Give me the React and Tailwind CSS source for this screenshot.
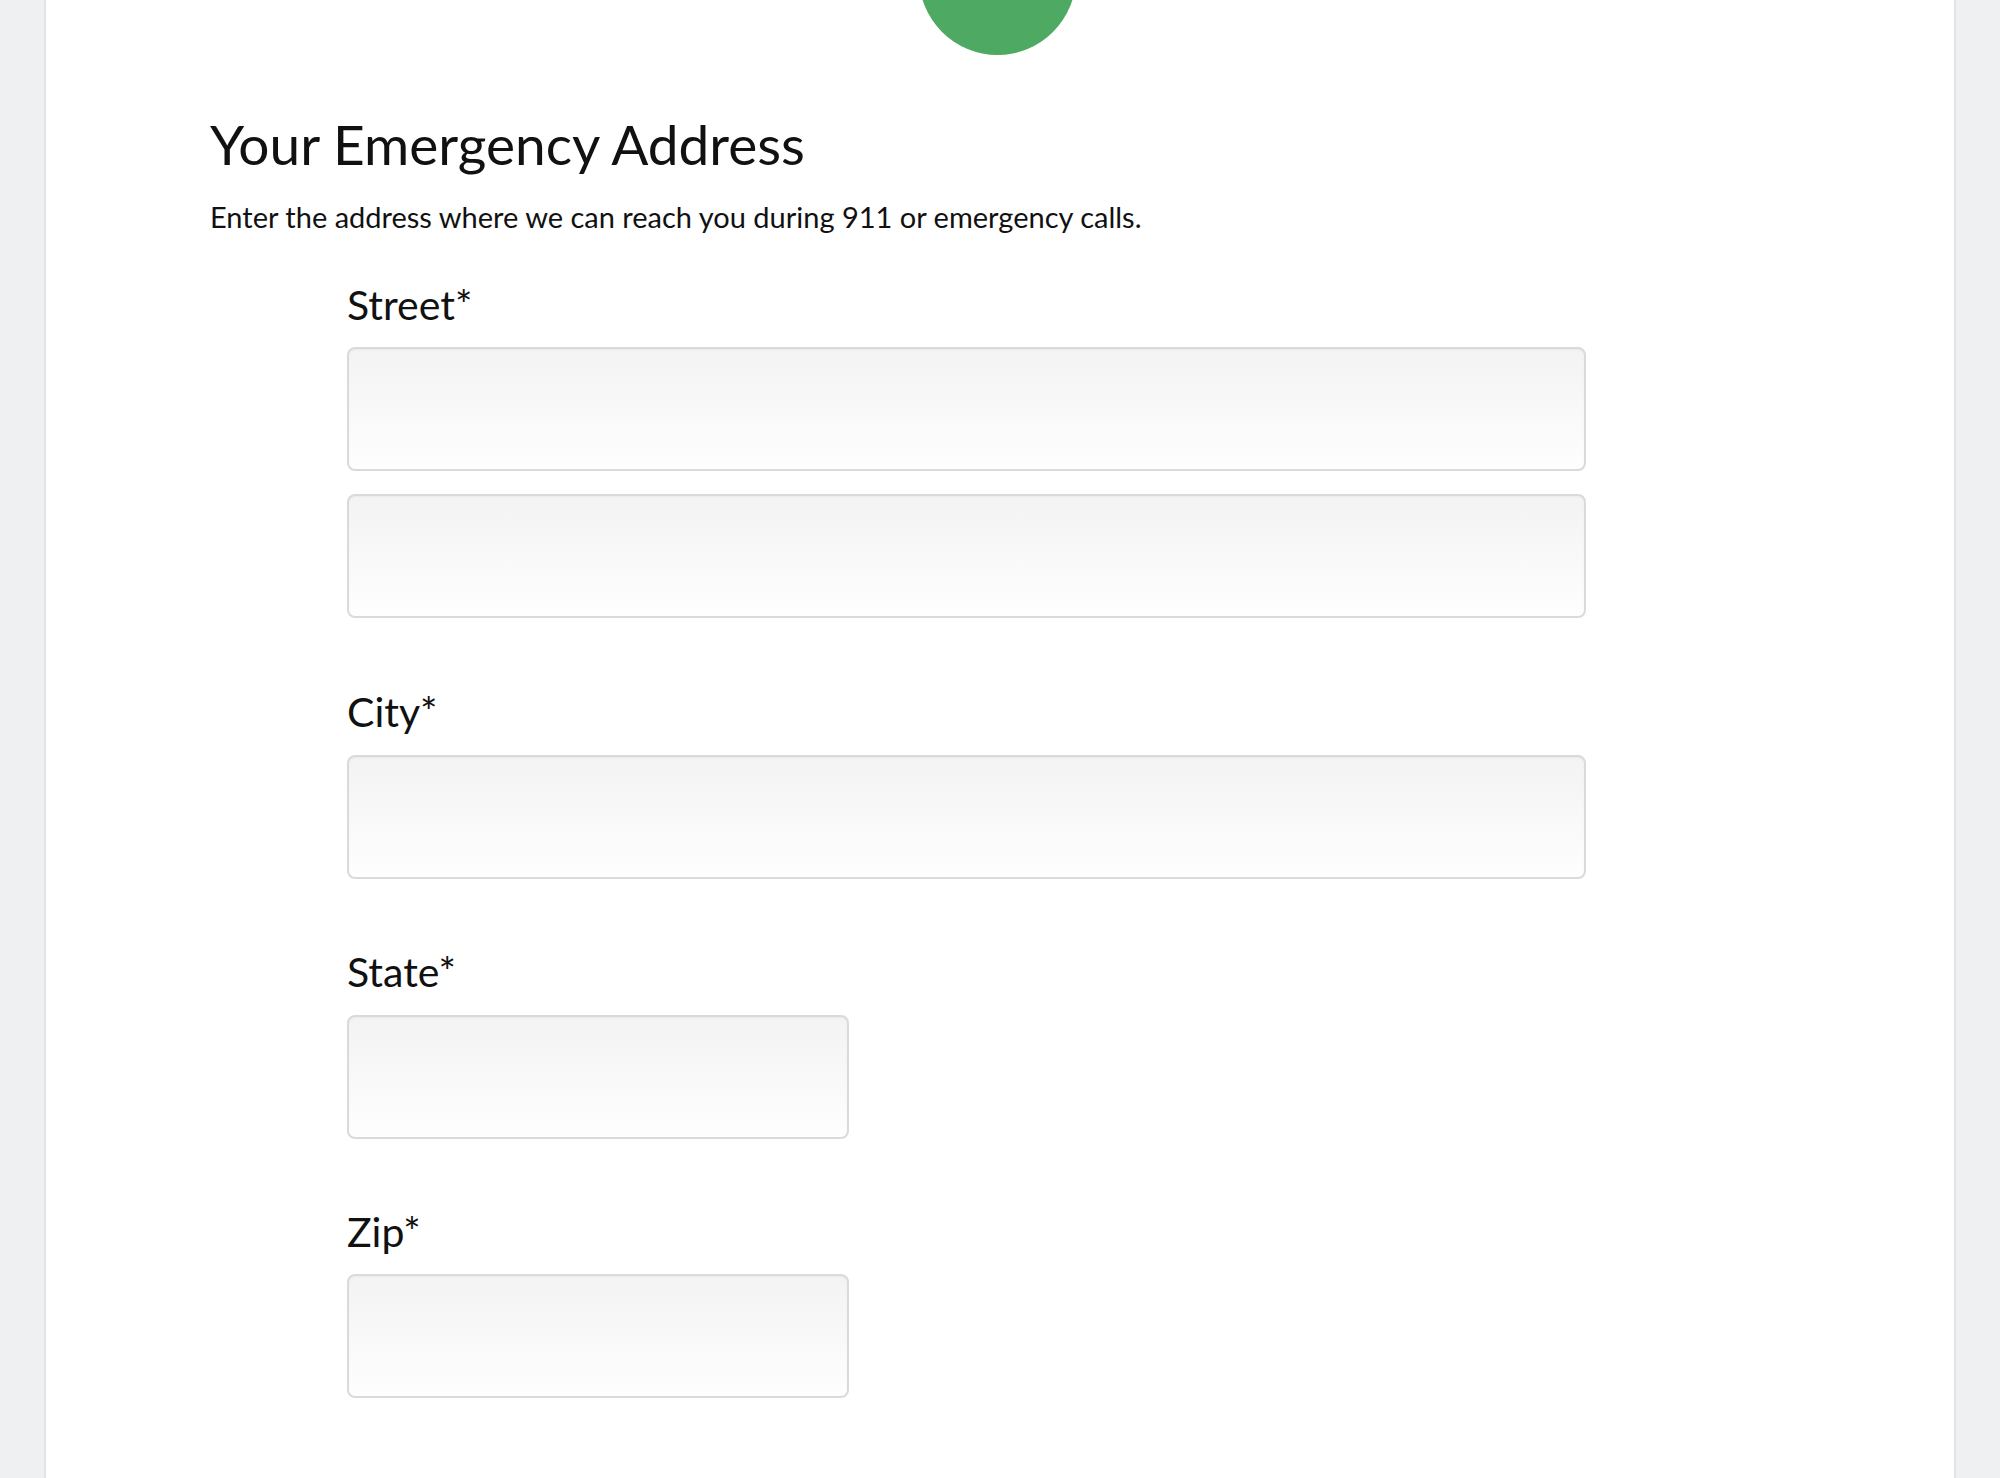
import React from 'react'

// campo de texto con el degradado gris del formulario
function Field({ label, wide = true, className = '' }) {
  return (
    <input
      type="text"
      aria-label={label}
      className={`block h-[124px] rounded-[8px] border-2 border-[#dadada] bg-gradient-to-b from-[#f3f3f3] to-[#fefefe] shadow-[inset_0_1px_2px_rgba(0,0,0,0.04)] outline-none ${
        wide ? 'w-[1239px]' : 'w-[502px]'
      } ${className}`}
    />
  )
}

function Label({ children, className = '' }) {
  return (
    <label className={`block text-[41px] leading-[41px] text-[#111] ${className}`}>
      {children}
    </label>
  )
}

export default function App() {
  return (
    <div
      className="min-h-[1478px] bg-[#eff0f2] px-[44px] overflow-hidden"
      style={{ fontFamily: 'Lato, "Open Sans", sans-serif' }}
    >
      <div className="min-h-[1478px] bg-white border-x-2 border-[#e3e4e7] relative">
        {/* círculo verde de la parte superior */}
        <div className="absolute left-[873px] top-[-102px] w-[157px] h-[157px] rounded-full bg-[#4eaa63] flex items-end justify-center pb-[53px]">
          <svg width="40" height="40" viewBox="0 0 24 24" fill="none" stroke="white" strokeWidth="3" strokeLinecap="round" strokeLinejoin="round">
            <path d="M4 12l5 5L20 6" />
          </svg>
        </div>

        <div className="pt-[117px] pl-[164px]">
          <h1 className="text-[55px] leading-[55px] text-[#111] font-normal">
            Your Emergency Address
          </h1>
          <p className="mt-[30px] text-[29px] leading-[29px] text-[#111]">
            Enter the address where we can reach you during 911 or emergency calls.
          </p>

          <form className="pl-[137px] mt-[53px]">
            <div>
              <Label className="mb-[22px]">Street*</Label>
              <Field label="Street line 1" />
              <Field label="Street line 2" className="mt-[23px]" />
            </div>

            <div className="mt-[73px]">
              <Label className="mb-[23px]">City*</Label>
              <Field label="City" />
            </div>

            <div className="mt-[72px]">
              <Label className="mb-[23px]">State*</Label>
              <Field label="State" wide={false} />
            </div>

            <div className="mt-[72px]">
              <Label className="mb-[22px]">Zip*</Label>
              <Field label="Zip" wide={false} />
            </div>
          </form>
        </div>
      </div>
    </div>
  )
}
